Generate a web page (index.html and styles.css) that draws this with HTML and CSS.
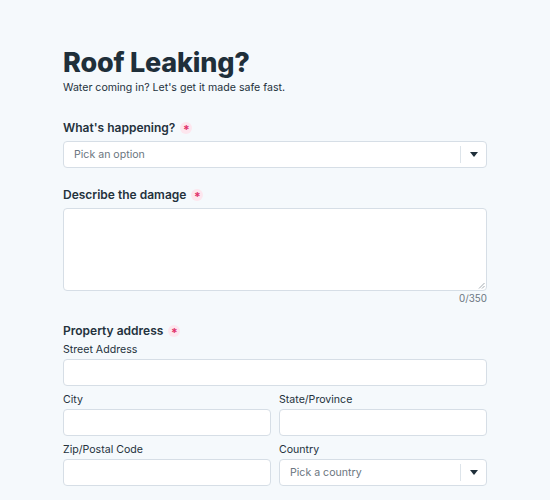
FILE: index.html
```html
<!DOCTYPE html>
<html lang="en">
<head>
<meta charset="utf-8">
<link rel="stylesheet" href="styles.css">
</head>
<body>
<main class="form">
  <h1 class="title">Roof Leaking?</h1>
  <p class="subtitle">Water coming in? Let's get it made safe fast.</p>

  <div class="field field-first">
    <label class="label">What's happening? <span class="req">*</span></label>
    <div class="select">
      <span class="placeholder">Pick an option</span>
      <span class="select-divider"></span>
      <span class="caret"></span>
    </div>
  </div>

  <div class="field">
    <label class="label">Describe the damage <span class="req">*</span></label>
    <div class="textarea">
      <svg class="grip" width="7" height="7" viewBox="0 0 7 7"><path d="M6.5 1 L1 6.5 M6.5 4 L4 6.5" stroke="#8a949c" stroke-width="0.8" fill="none"/></svg>
    </div>
    <div class="counter">0/350</div>
  </div>

  <div class="field field-address">
    <label class="label label-address">Property address <span class="req">*</span></label>
    <div class="sub">
      <span class="sublabel">Street Address</span>
      <div class="input"></div>
    </div>
    <div class="row">
      <div class="sub">
        <span class="sublabel">City</span>
        <div class="input"></div>
      </div>
      <div class="sub">
        <span class="sublabel">State/Province</span>
        <div class="input"></div>
      </div>
    </div>
    <div class="row">
      <div class="sub">
        <span class="sublabel">Zip/Postal Code</span>
        <div class="input"></div>
      </div>
      <div class="sub">
        <span class="sublabel">Country</span>
        <div class="select">
          <span class="placeholder">Pick a country</span>
          <span class="select-divider"></span>
          <span class="caret"></span>
        </div>
      </div>
    </div>
  </div>
</main>
</body>
</html>
```

FILE: styles.css
```css
html, body {
  margin: 0;
  padding: 0;
  background: #f5f9fc;
}
body {
  font-family: Inter, "Noto Sans", sans-serif;
  color: #24323c;
}
.form {
  width: 424px;
  margin-left: 63px;
  padding-top: 46px;
}
.title {
  margin: 0;
  font-size: 27px;
  font-weight: 800;
  line-height: 34px;
  letter-spacing: -0.2px;
  color: #1f2f3a;
}
.subtitle {
  margin: 1px 0 0;
  font-size: 10.6px;
  line-height: 14px;
  color: #24323c;
}
.field {
  margin-top: 18px;
}
.field-first {
  margin-top: 24px;
}
.label {
  display: flex;
  align-items: center;
  gap: 5px;
  font-size: 12px;
  font-weight: 600;
  line-height: 18px;
  color: #24323c;
  margin-bottom: 4px;
}
.req {
  display: inline-flex;
  align-items: center;
  justify-content: center;
  width: 12px;
  height: 12px;
  border-radius: 50%;
  background: #fde6ee;
  color: #e0306a;
  font-size: 12px;
  font-weight: 700;
  line-height: 12px;
  padding-top: 4px;
  box-sizing: border-box;
}
.select, .input, .textarea {
  box-sizing: border-box;
  background: #ffffff;
  border: 1px solid #d6dee6;
  border-radius: 4px;
}
.select {
  display: flex;
  align-items: center;
  height: 27px;
  padding-left: 10px;
}
.placeholder {
  flex: 1;
  font-size: 10.6px;
  color: #6b7680;
}
.select-divider {
  width: 1px;
  height: 17px;
  background: #dde4ea;
}
.caret {
  width: 25px;
  display: flex;
  justify-content: center;
}
.caret::before {
  content: "";
  border-left: 4.5px solid transparent;
  border-right: 4.5px solid transparent;
  border-top: 5px solid #1f2f3a;
}
.textarea {
  position: relative;
  height: 83px;
}
.grip {
  position: absolute;
  right: 1px;
  bottom: 1px;
}
.counter {
  text-align: right;
  font-size: 9.8px;
  line-height: 14px;
  color: #6b7680;
  margin-top: 1px;
}
.field-address {
  margin-top: 16px;
}
.label-address {
  margin-bottom: 3px;
}
.sub {
  display: flex;
  flex-direction: column;
}
.sublabel {
  font-size: 10.6px;
  line-height: 14px;
  color: #24323c;
  margin-bottom: 2px;
}
.input {
  height: 27px;
}
.row {
  display: grid;
  grid-template-columns: 1fr 1fr;
  gap: 8px;
  margin-top: 7px;
}
```
